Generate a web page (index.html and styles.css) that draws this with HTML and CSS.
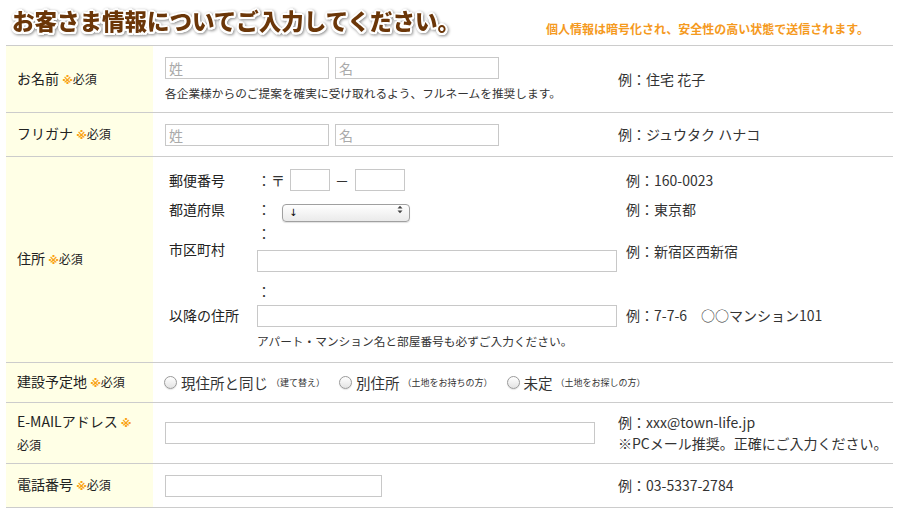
FILE: index.html
```html
<!DOCTYPE html>
<html lang="ja">
<head>
<meta charset="utf-8">
<title>お客さま情報</title>
<link rel="stylesheet" href="styles.css">
</head>
<body>
<div class="page">
  <header class="head">
    <h1 class="title">お客さま情報についてご入力してください。</h1>
    <p class="secure">個人情報は暗号化され、安全性の高い状態で送信されます。</p>
  </header>

  <div class="form">
    <div class="row r-name">
      <div class="th"><div class="lab">お名前 <span class="req">※</span><span class="must">必須</span></div></div>
      <div class="td">
        <div class="field">
          <div class="pair">
            <input class="in in-half" type="text" placeholder="姓">
            <input class="in in-half" type="text" placeholder="名">
          </div>
          <p class="note">各企業様からのご提案を確実に受け取れるよう、フルネームを推奨します。</p>
        </div>
        <div class="ex">例：住宅 花子</div>
      </div>
    </div>

    <div class="row r-kana">
      <div class="th"><div class="lab">フリガナ <span class="req">※</span><span class="must">必須</span></div></div>
      <div class="td">
        <div class="field">
          <div class="pair">
            <input class="in in-half" type="text" placeholder="姓">
            <input class="in in-half" type="text" placeholder="名">
          </div>
        </div>
        <div class="ex">例：ジュウタク ハナコ</div>
      </div>
    </div>

    <div class="row r-addr">
      <div class="th"><div class="lab">住所 <span class="req">※</span><span class="must">必須</span></div></div>
      <div class="td td-addr">
        <div class="addr">
          <div class="al">郵便番号</div>
          <div class="av av-zip"><span class="colon">：</span><span class="zipmark">〒</span><input class="in in-zip1" type="text"><span class="dash">－</span><input class="in in-zip2" type="text"></div>
          <div class="ae">例：160-0023</div>

          <div class="al">都道府県</div>
          <div class="av av-pref"><span class="colon">：</span>
            <span class="sel-wrap">
              <select class="sel"><option>↓</option></select>
              <svg class="sel-arrows" width="6" height="9" viewBox="0 0 6 9"><path d="M0.5 3.5 L3 0.8 L5.5 3.5 Z M0.5 5.5 L3 8.2 L5.5 5.5 Z" fill="#444"/></svg>
            </span>
          </div>
          <div class="ae">例：東京都</div>

          <div class="al al-city">市区町村</div>
          <div class="av av-city"><div class="cline">：</div><input class="in in-wide" type="text"></div>
          <div class="ae">例：新宿区西新宿</div>

          <div class="al">以降の住所</div>
          <div class="av av-rest"><div class="cline">：</div><input class="in in-wide in-rest" type="text"><p class="note note-addr">アパート・マンション名と部屋番号も必ずご入力ください。</p></div>
          <div class="ae">例：7-7-6　○○マンション101</div>
        </div>
      </div>
    </div>

    <div class="row r-site">
      <div class="th"><div class="lab">建設予定地 <span class="req">※</span><span class="must">必須</span></div></div>
      <div class="td td-radio">
        <label class="opt"><input type="radio" name="site"><span class="opt-main">現住所と同じ</span><span class="opt-sub">（建て替え）</span></label>
        <label class="opt"><input type="radio" name="site"><span class="opt-main">別住所</span><span class="opt-sub">（土地をお持ちの方）</span></label>
        <label class="opt"><input type="radio" name="site"><span class="opt-main">未定</span><span class="opt-sub">（土地をお探しの方）</span></label>
      </div>
    </div>

    <div class="row r-mail">
      <div class="th"><div class="lab">E-MAILアドレス <span class="req">※</span> <span class="must">必須</span></div></div>
      <div class="td">
        <div class="field">
          <input class="in in-mail" type="text">
        </div>
        <div class="ex">例：xxx@town-life.jp<br>※PCメール推奨。正確にご入力ください。</div>
      </div>
    </div>

    <div class="row r-tel">
      <div class="th"><div class="lab">電話番号 <span class="req">※</span><span class="must">必須</span></div></div>
      <div class="td">
        <div class="field">
          <input class="in in-tel" type="text">
        </div>
        <div class="ex">例：03-5337-2784</div>
      </div>
    </div>
  </div>
</div>
</body>
</html>
```

FILE: styles.css
```css
* { box-sizing: border-box; }

body {
  margin: 0;
  background: #fff;
  color: #333;
  font-family: "Noto Sans CJK JP", "Noto Sans", sans-serif;
}

.page {
  width: 887px;
  margin-left: 6px;
}

/* header */
.head {
  height: 45px;
  display: flex;
  justify-content: space-between;
  align-items: flex-start;
}

.title {
  margin: 8px 0 0 6px;
  font-size: 22.5px;
  line-height: 24px;
  font-weight: 900;
  color: #6b3608;
  letter-spacing: 0;
  text-shadow:
    2px 0 0 #fff, -2px 0 0 #fff, 0 2px 0 #fff, 0 -2px 0 #fff,
    1.5px 1.5px 0 #fff, -1.5px -1.5px 0 #fff, 1.5px -1.5px 0 #fff, -1.5px 1.5px 0 #fff,
    2px 1px 0 #fff, -2px 1px 0 #fff, 1px 2px 0 #fff, -1px 2px 0 #fff;
  filter: drop-shadow(1px 1px 1.5px rgba(0, 0, 0, 0.45));
}

.secure {
  margin: 21px 24px 0 0;
  font-size: 12px;
  line-height: 16px;
  font-weight: 700;
  color: #f59a1e;
}

/* form table */
.form {
  border-top: 1px solid #ccc;
}

.row {
  display: grid;
  grid-template-columns: 147px 1fr;
  border-bottom: 1px solid #ccc;
  box-sizing: content-box;
}

.r-name { height: 66px; }
.r-kana { height: 43px; }
.r-addr { height: 205px; }
.r-site { height: 39px; }
.r-mail { height: 60px; }
.r-tel  { height: 43px; }

.th {
  background: #ffffe6;
  padding: 0 8px 0 11px;
  display: flex;
  align-items: center;
}

.lab {
  font-size: 14px;
  line-height: 20px;
  color: #222;
}

.req {
  color: #f9a316;
  font-family: "DejaVu Sans", sans-serif;
  font-size: 11px;
  font-weight: 700;
}

.must {
  font-size: 12px;
  white-space: nowrap;
}

.td {
  display: flex;
  align-items: center;
  padding-left: 12px;
}

.field {
  width: 453px;
  flex: none;
}

.pair {
  display: flex;
  gap: 6px;
}

.in {
  height: 22px;
  border: 1px solid #c8c8c8;
  background: #fff;
  padding: 0 3px;
  font-family: inherit;
  font-size: 14px;
  color: #333;
  outline: none;
  display: block;
}

.in::placeholder { color: #aaa; }

.in-half { width: 164px; }
.in-mail { width: 430px; }
.in-tel  { width: 217px; }

.note {
  margin: 5px 0 0;
  font-size: 11.7px;
  line-height: 18px;
  color: #333;
}

.ex {
  font-size: 14px;
  line-height: 21px;
  color: #333;
}

/* address block */
.td-addr {
  padding: 9px 0 10px 16px;
  align-items: flex-start;
}

.addr {
  display: grid;
  grid-template-columns: 88px 369px auto;
  grid-template-rows: 28px 30px 54px 74px;
}

.al {
  font-size: 14px;
  line-height: 20px;
  color: #222;
  align-self: center;
}

.al-city { margin-bottom: 4px; }

.ae {
  font-size: 14px;
  line-height: 20px;
  color: #333;
  align-self: center;
}

.av {
  font-size: 14px;
  color: #333;
}

.av-zip,
.av-pref {
  display: flex;
  align-items: center;
}

.colon { line-height: 20px; }

.in-zip1 { width: 40px; margin-left: 5px; }
.in-zip2 { width: 50px; }

.dash {
  margin: 0 6px 0 5px;
  font-size: 14px;
}

.sel-wrap {
  position: relative;
  display: inline-block;
  width: 128px;
  height: 18px;
  margin-left: 11px;
}

.sel {
  appearance: none;
  -webkit-appearance: none;
  width: 100%;
  height: 100%;
  border: 1px solid #a0a0a0;
  border-radius: 4px;
  background: linear-gradient(#ffffff, #eaeaea);
  box-shadow: 0 1px 1px rgba(0, 0, 0, 0.12);
  padding: 0 0 0 6px;
  font-family: "DejaVu Sans", sans-serif;
  font-size: 10px;
  color: #000;
}

.sel-arrows {
  position: absolute;
  right: 7px;
  top: 4.5px;
  pointer-events: none;
}

.cline {
  line-height: 18px;
}

.av-city .in { margin-top: 8px; }

.av-rest { padding-top: 4px; }
.av-rest .in { margin-top: 5px; }

.in-wide { width: 360px; }

.note-addr {
  margin: 6px 0 0;
  line-height: 16px;
  font-size: 11.7px;
}

/* radios */
.td-radio {
  padding-left: 11px;
  gap: 14px;
}

.opt {
  display: inline-flex;
  align-items: center;
  color: #333;
}

.opt input {
  appearance: none;
  -webkit-appearance: none;
  width: 13px;
  height: 13px;
  margin: 0 4px 0 0;
  border-radius: 50%;
  border: 1px solid #9a9a9a;
  background: linear-gradient(#ffffff, #e3e3e3);
  box-shadow: 0 1px 1px rgba(0, 0, 0, 0.1);
}

.opt-main {
  font-size: 14.5px;
  line-height: 20px;
}

.opt-sub {
  font-size: 9px;
  line-height: 20px;
  margin-left: 3px;
}
```
